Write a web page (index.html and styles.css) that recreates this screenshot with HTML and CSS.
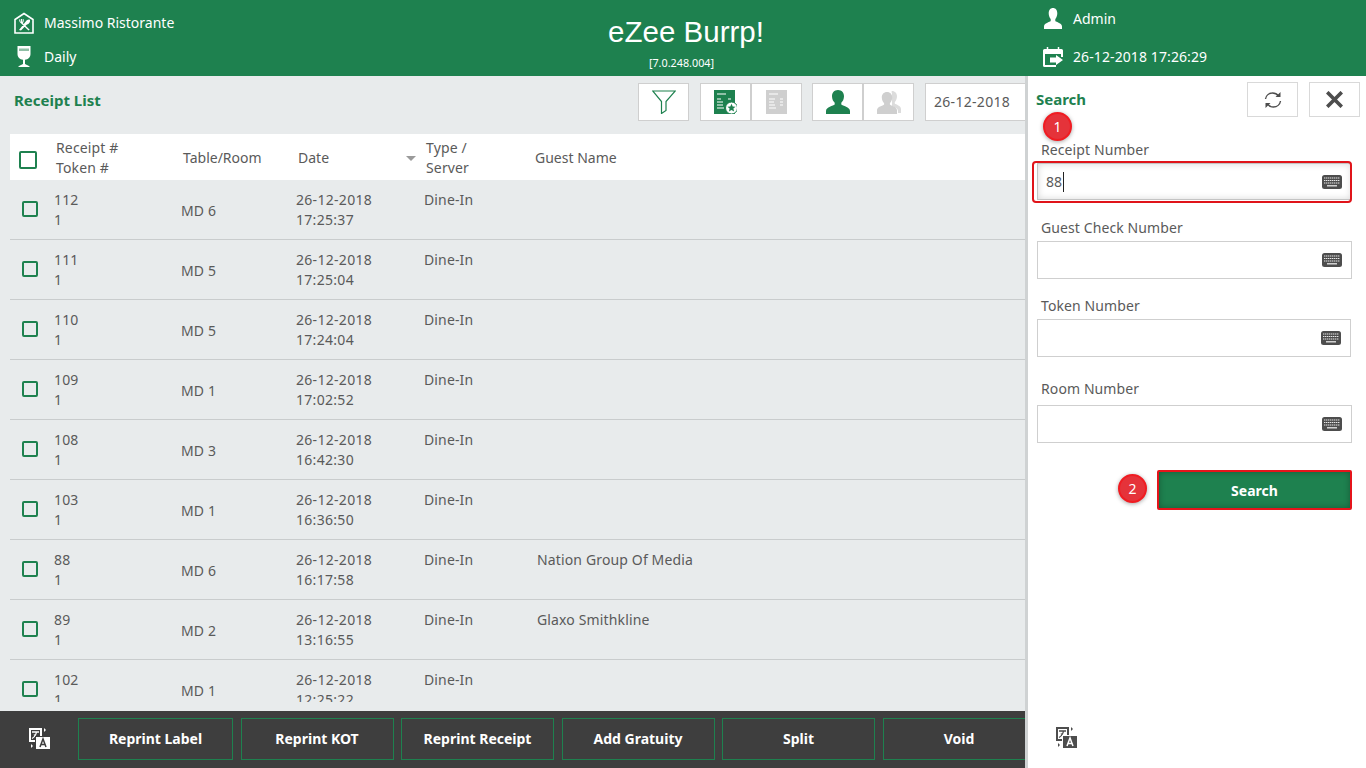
FILE: index.html
```html
<!DOCTYPE html>
<html lang="en">
<head>
<meta charset="utf-8">
<title>eZee Burrp!</title>
<link rel="stylesheet" href="styles.css">
</head>
<body>
<svg class="defs" width="0" height="0" aria-hidden="true">
  <symbol id="kbd" viewBox="0 0 20 14"><rect width="20" height="14" rx="2.5" fill="#4d4d4d"/><path d="M2 3h16M2 5.5h16M2 8h16" stroke="#e8e8e8" stroke-width="1.2" stroke-dasharray="1.4 .6" fill="none"/><path d="M5 10.8h10" stroke="#e8e8e8" stroke-width="1.3"/></symbol>
  <symbol id="translate" viewBox="0 0 22 22"><path d="M1 1h13v14H1z" fill="currentColor"/><path d="M3 3h9v10H3z" fill="var(--tr-bg)"/><path d="M4 5h7M8.5 5c-.5 3-2 5-4.500 6.500M6 7.500c1 1.500 2 2.500 3.500 3" stroke="currentColor" stroke-width="1.300" fill="none"/><path d="M7 9h15v13H7z" fill="var(--tr-bg)"/><path d="M8 10h14v12H8z" fill="currentColor"/><path d="M12 20l3-8 3 8M13 17.500h4" stroke="var(--tr-bg)" stroke-width="1.500" fill="none"/><path d="M16 1l2 2-2 2zM3 17l2 2-2 2z" fill="currentColor"/></symbol>
</svg>
<header class="topbar">
  <div class="top-col top-left">
    <div class="top-item">
      <svg class="top-icon" viewBox="0 0 22 22"><path d="M2 21V7.500L11 1.500l9 6V21z" fill="none" stroke="#fff" stroke-width="1.600"/><path d="M6 18l7.500-9.500c1.500-1.300 3-1.300 3.500-.6.500 1.600-.7 4.100-3.400 4.900L8 18.500zM15.500 18.500L8.500 11.800C7 10.500 6 9.500 6.200 7.500l1-.2.300 2.500.6-.1-.1-2.600h1l.2 2.600.6-.1-.1-2.500 1 .2c.3 2-.3 3.300-1 3.600l7 6.900z" fill="#fff"/></svg>
      <span>Massimo Ristorante</span>
    </div>
    <div class="top-item">
      <svg class="top-icon" viewBox="0 0 22 22"><path d="M4.500 0h13v8c0 3.500-2.500 5.500-5.500 5.700V18l4.500 2.200V21H5.500v-.8L10 18v-4.300C7 13.500 4.500 11.500 4.500 8z" fill="#fff"/><path d="M6 2.500h10v2.500H6z" fill="#8fbfa6"/></svg>
      <span>Daily</span>
    </div>
  </div>
  <div class="top-center">
    <div class="brand">eZee Burrp!</div>
    <div class="version">[7.0.248.004]</div>
  </div>
  <div class="top-col top-right">
    <div class="top-item">
      <svg class="top-icon" viewBox="0 0 22 22"><path d="M11 0c2.700 0 4.300 2.200 4.300 5.300 0 2.400-.9 4.500-2 5.700v2c.9 1.200 6.700 2 6.700 5.500V21H2v-2.500C2 15 7.800 14.200 8.700 13v-2c-1.100-1.200-2-3.300-2-5.700C6.700 2.200 8.300 0 11 0z" fill="#fff"/></svg>
      <span>Admin</span>
    </div>
    <div class="top-item">
      <svg class="top-icon" viewBox="0 0 22 22"><path d="M2.500 3h17a1.500 1.500 0 0 1 1.500 1.500V11h-2V8H3v11h11v2H2.500A1.500 1.500 0 0 1 1 19.500v-15A1.500 1.500 0 0 1 2.500 3z" fill="#fff"/><path d="M5.500 1v4M16.500 1v4" stroke="#fff" stroke-width="1.500"/><path d="M8 11.500h6V9l7 5-7 5v-2.500H8z" fill="#fff"/></svg>
      <span class="top-clock">26-12-2018 17:26:29</span>
    </div>
  </div>
</header>
<div class="main">
  <section class="list">
    <div class="toolbar">
      <h2 class="title">Receipt List</h2>
      <div class="tools">
        <button class="tool" type="button"><svg class="ic-filter" viewBox="0 0 24 24"><path d="M.7 1h22.600L14 11.500v9L9.500 23.500V11.500z" fill="none" stroke="#1e814f" stroke-width="1.200"/></svg></button>
        <div class="tool-group">
          <button class="tool" type="button"><svg class="ic-doc" viewBox="0 0 23 24"><path d="M0 0h21v24H0z" fill="#1e814f"/><path d="M3 4h9M3 9h4M14 9h3M3 12h6M3 15h6M3 18h7" stroke="#fff" stroke-width="1.200"/><circle cx="17.500" cy="18" r="6" fill="#fff" stroke="#1e814f" stroke-width="1"/><path d="M17.500 13.800l1.200 2.700 2.800.2-2.100 1.900.7 2.900-2.600-1.500-2.600 1.500.7-2.900-2.100-1.900 2.800-.2z" fill="#1e814f"/></svg></button>
          <button class="tool" type="button"><svg class="ic-doc" viewBox="0 0 23 24"><path d="M1 0h21v24H1z" fill="#cfcfcf"/><path d="M4 4h9M4 9h6M15 9h3M4 12h5M15 12h3M4 15h6M4 18h7M15 15h3" stroke="#fff" stroke-width="1.200"/></svg></button>
        </div>
        <div class="tool-group tool-group-users">
          <button class="tool" type="button"><svg class="ic-user" viewBox="0 0 24 24"><path d="M12 0c3.800 0 6 2.800 6 6.300 0 3-1.300 5.200-2.700 6.500v1.700c1.200 1.500 8.700 2.300 8.700 6.500V24H0v-3c0-4.200 7.500-5 8.700-6.500v-1.700C7.300 11.500 6 9.300 6 6.300 6 2.800 8.200 0 12 0z" fill="#1e814f"/></svg></button>
          <button class="tool" type="button"><svg class="ic-user" viewBox="0 0 24 24"><path d="M15 1c3 0 5 2.300 5 5.300 0 2.500-1 4.500-2.200 5.700v1.500c1 1.200 6.200 2 6.200 5.500V23h-3v-2c0-3-4-4-6-5V4c0-1.500-1-2.500 0-3z" fill="#dcdcdc"/><path d="M10 2c3.300 0 5.200 2.400 5.200 5.500 0 2.600-1.100 4.500-2.300 5.600v1.500c1 1.300 7.100 2 7.100 5.600V24H0v-3.800c0-3.600 6.100-4.300 7.100-5.600v-1.500C5.900 12 4.800 10.100 4.800 7.500 4.800 4.400 6.700 2 10 2z" fill="#cfcfcf"/></svg></button>
        </div>
        <div class="date-box">26-12-2018</div>
      </div>
    </div>
    <div class="table-wrap">
      <div class="row head">
        <span class="check-cell"><span class="check check-lg"></span></span>
        <span class="stack"><span>Receipt #</span><span>Token #</span></span>
        <span>Table/Room</span>
        <span class="date-head">Date<span class="sort"></span></span>
        <span class="stack"><span>Type /</span><span>Server</span></span>
        <span>Guest Name</span>
      </div>
      <div class="body">
        <div class="row item"><span class="check-cell"><span class="check"></span></span><span class="stack"><span>112</span><span>1</span></span><span>MD 6</span><span class="stack date"><span>26-12-2018</span><span>17:25:37</span></span><span class="top">Dine-In</span><span class="top"></span></div>
        <div class="row item"><span class="check-cell"><span class="check"></span></span><span class="stack"><span>111</span><span>1</span></span><span>MD 5</span><span class="stack date"><span>26-12-2018</span><span>17:25:04</span></span><span class="top">Dine-In</span><span class="top"></span></div>
        <div class="row item"><span class="check-cell"><span class="check"></span></span><span class="stack"><span>110</span><span>1</span></span><span>MD 5</span><span class="stack date"><span>26-12-2018</span><span>17:24:04</span></span><span class="top">Dine-In</span><span class="top"></span></div>
        <div class="row item"><span class="check-cell"><span class="check"></span></span><span class="stack"><span>109</span><span>1</span></span><span>MD 1</span><span class="stack date"><span>26-12-2018</span><span>17:02:52</span></span><span class="top">Dine-In</span><span class="top"></span></div>
        <div class="row item"><span class="check-cell"><span class="check"></span></span><span class="stack"><span>108</span><span>1</span></span><span>MD 3</span><span class="stack date"><span>26-12-2018</span><span>16:42:30</span></span><span class="top">Dine-In</span><span class="top"></span></div>
        <div class="row item"><span class="check-cell"><span class="check"></span></span><span class="stack"><span>103</span><span>1</span></span><span>MD 1</span><span class="stack date"><span>26-12-2018</span><span>16:36:50</span></span><span class="top">Dine-In</span><span class="top"></span></div>
        <div class="row item"><span class="check-cell"><span class="check"></span></span><span class="stack"><span>88</span><span>1</span></span><span>MD 6</span><span class="stack date"><span>26-12-2018</span><span>16:17:58</span></span><span class="top">Dine-In</span><span class="top">Nation Group Of Media</span></div>
        <div class="row item"><span class="check-cell"><span class="check"></span></span><span class="stack"><span>89</span><span>1</span></span><span>MD 2</span><span class="stack date"><span>26-12-2018</span><span>13:16:55</span></span><span class="top">Dine-In</span><span class="top">Glaxo Smithkline</span></div>
        <div class="row item"><span class="check-cell"><span class="check"></span></span><span class="stack"><span>102</span><span>1</span></span><span>MD 1</span><span class="stack date"><span>26-12-2018</span><span>12:25:22</span></span><span class="top">Dine-In</span><span class="top"></span></div>
      </div>
    </div>
    <footer class="actions">
      <svg class="tr-icon tr-dark" viewBox="0 0 22 22"><use href="#translate"/></svg>
      <div class="action-btns">
        <button class="action" type="button">Reprint Label</button>
        <button class="action" type="button">Reprint KOT</button>
        <button class="action" type="button">Reprint Receipt</button>
        <button class="action" type="button">Add Gratuity</button>
        <button class="action" type="button">Split</button>
        <button class="action" type="button">Void</button>
      </div>
    </footer>
  </section>
  <aside class="panel">
    <div class="panel-head">
      <h2 class="title panel-title">Search</h2>
      <button class="panel-btn" type="button"><svg class="ic-refresh" viewBox="0 0 18 18"><path d="M1.500 8C2 4.500 5 2 8.500 2c2.500 0 4.500 1 6 3M16.500 10c-.5 3.500-3.500 6-7 6-2.500 0-4.500-1-6-3" fill="none" stroke="#4d4d4d" stroke-width="1.400"/><path d="M16.500 1v5h-5zM1.500 17v-5h5z" fill="#4d4d4d"/></svg></button>
      <button class="panel-btn" type="button"><svg class="ic-close" viewBox="1 1 14 14"><path d="M2 2l12 12M14 2L2 14" stroke="#4d4d4d" stroke-width="3"/></svg></button>
    </div>
    <form class="form">
      <span class="badge badge-one">1</span>
      <label class="field field-first">
        <span class="label">Receipt Number</span>
        <span class="input focus"><span class="value">88</span><span class="caret"></span><svg class="kbd" viewBox="0 0 20 14"><use href="#kbd"/></svg></span>
      </label>
      <label class="field field-guest">
        <span class="label">Guest Check Number</span>
        <span class="input"><svg class="kbd" viewBox="0 0 20 14"><use href="#kbd"/></svg></span>
      </label>
      <label class="field field-token">
        <span class="label">Token Number</span>
        <span class="input"><svg class="kbd" viewBox="0 0 20 14"><use href="#kbd"/></svg></span>
      </label>
      <label class="field field-room">
        <span class="label">Room Number</span>
        <span class="input"><svg class="kbd" viewBox="0 0 20 14"><use href="#kbd"/></svg></span>
      </label>
      <div class="submit-row">
        <span class="badge badge-two">2</span>
        <button class="submit" type="button">Search</button>
      </div>
    </form>
    <svg class="tr-icon tr-light" viewBox="0 0 22 22"><use href="#translate"/></svg>
  </aside>
</div>
</body>
</html>
```
FILE: styles.css
```css
* { box-sizing: border-box; }
html, body { margin: 0; height: 100%; }
body {
  width: 1366px;
  height: 768px;
  overflow: hidden;
  font-family: "Noto Sans", "Open Sans", sans-serif;
  font-size: 14px;
  color: #5a5a5a;
  background: #e8ebec;
  display: flex;
  flex-direction: column;
}
.defs { position: absolute; }
button { font-family: inherit; padding: 0; cursor: pointer; }

.topbar {
  height: 76px;
  flex: none;
  background: #1e814f;
  color: #fff;
  display: flex;
}
.top-col { display: flex; flex-direction: column; }
.top-left { width: 346px; padding: 12px 0 0 13px; gap: 12px; }
.top-right { width: 340px; padding: 8px 0 0 16px; gap: 16px; }
.top-center { flex: 1; text-align: center; padding-top: 12px; }
.top-item { display: flex; align-items: center; gap: 9px; height: 22px; line-height: 22px; }
.top-icon { width: 22px; height: 22px; flex: none; }
.top-clock { letter-spacing: .1px; }
.brand { font-family: "Liberation Sans", Arial, sans-serif; font-size: 29.500px; line-height: 40px; }
.version { font-size: 10.800px; line-height: 14px; margin: 4px 9px 0 0; }

.main { flex: 1; display: flex; min-height: 0; }
.list { width: 1025px; display: flex; flex-direction: column; min-height: 0; }
.toolbar { height: 58px; flex: none; display: flex; padding: 7px 0 0 14px; justify-content: space-between; }
.title { margin: 0; font-size: 15px; font-weight: 700; color: #1e814f; line-height: 34px; }
.tools { display: flex; height: 38px; }
.tool-group { display: flex; margin-left: 11px; }
.tool-group-users { margin-left: 10px; }
.tool {
  width: 51px;
  height: 38px;
  background: #fff;
  border: 1px solid #cfcfcf;
  display: flex;
  align-items: center;
  justify-content: center;
}
.ic-filter { width: 24px; height: 24px; }
.ic-doc { width: 23px; height: 24px; }
.ic-user { width: 24px; height: 24px; }
.date-box {
  width: 100px;
  margin-left: 11px;
  background: #fff;
  border: 1px solid #cfcfcf;
  border-right: 0;
  line-height: 36px;
  padding-left: 8px;
  letter-spacing: .3px;
}

.table-wrap { flex: 1; min-height: 0; margin-left: 10px; padding-bottom: 9px; display: flex; flex-direction: column; }
.row {
  display: grid;
  grid-template-columns: 44px 127px 115px 128px 113px 1fr;
  align-items: center;
}
.head { height: 46px; flex: none; background: #fff; line-height: 20px; padding-top: 2px; grid-template-columns: 46px 127px 115px 128px 109px 1fr; }
.head .stack { letter-spacing: .15px; }
.body { flex: 1; overflow: hidden; min-height: 0; }
.item { height: 60px; border-bottom: 1px solid #c9cccd; line-height: 20px; padding-top: 3px; letter-spacing: .14px; }
.item .stack { margin-bottom: 2px; }
.item .date { letter-spacing: .3px; }
.check-cell { display: flex; padding-left: 12px; margin-bottom: 4px; }
.head .check-cell { padding-left: 9px; margin-bottom: 0; margin-top: 4px; }
.check { width: 16px; height: 16px; border: 2px solid #1e814f; border-radius: 2px; display: block; }
.check-lg { width: 18px; height: 18px; border-width: 2.500px; }
.stack { display: flex; flex-direction: column; }
.top { align-self: start; padding-top: 7px; }
.date-head { display: flex; justify-content: space-between; align-items: center; padding-right: 10px; }
.sort { width: 0; height: 0; border-left: 5px solid transparent; border-right: 5px solid transparent; border-top: 5px solid #9a9a9a; }

.actions { height: 57px; flex: none; background: #3e3e3e; display: flex; padding-top: 7px; position: relative; z-index: 1; }
.tr-icon { width: 22px; height: 22px; }
.tr-dark { color: #fff; --tr-bg: #3e3e3e; margin: 9px 0 0 28px; flex: none; }
.tr-light { color: #4d4d4d; --tr-bg: #fff; margin: auto 0 20px 27px; display: block; flex: none; }
.action-btns { display: flex; gap: 7.500px; margin-left: 28px; flex: 1; min-width: 0; overflow: hidden; height: 42px; }
.action {
  width: 153px;
  flex: none;
  height: 42px;
  background: #3e3e3e;
  border: 1px solid #1e814f;
  color: #fff;
  font-size: 14px;
  font-weight: 700;
  padding-bottom: 2px;
}
.action:first-child { width: 155px; }

.panel {
  width: 341px;
  background: #fff;
  border-left: 3px solid #cfd2d3;
  display: flex;
  flex-direction: column;
  min-height: 0;
}
.panel-head { display: flex; padding: 6px 6px 0 8px; height: 60px; flex: none; }
.panel-title { flex: 1; line-height: 34px; }
.panel-btn {
  width: 51px;
  height: 35px;
  background: #fff;
  border: 1px solid #d9d9d9;
  margin-left: 11px;
  display: flex;
  align-items: center;
  justify-content: center;
}
.ic-refresh { width: 18px; height: 18px; }
.ic-close { width: 17px; height: 17px; }

.form { position: relative; padding: 0 14px 0 9px; }
.field { display: block; }
.label { display: block; line-height: 20px; padding-left: 4px; height: 20px; letter-spacing: .1px; }
.field-first { padding-top: 4px; }
.field-guest { margin-top: 18px; }
.field-token { margin-top: 17px; }
.field-token .input { margin-right: 1px; }
.field-room { margin-top: 22px; }
.field-room .input { margin-top: 6px; }
.input {
  position: relative;
  display: flex;
  align-items: center;
  height: 38px;
  margin-top: 3px;
  background: #fff;
  border: 1px solid #cfcfcf;
  padding-left: 8px;
  line-height: 20px;
}
.focus {
  height: 37px;
  border-color: #c4c4c4;
  border-right-color: #fff;
  box-shadow: inset 0 0 7px rgba(0,0,0,.16);
}
.focus::after {
  content: "";
  position: absolute;
  left: -6px;
  right: -1px;
  top: -3px;
  bottom: -4px;
  border: 2px solid #e0141a;
  border-radius: 4px;
  pointer-events: none;
}
.caret { width: 1px; height: 20px; background: #222; margin-left: 1px; }
.kbd { position: absolute; right: 9px; top: 11px; width: 20px; height: 14px; }

.submit-row { display: flex; justify-content: flex-end; margin-top: 27px; position: relative; }
.submit {
  width: 195px;
  height: 40px;
  background: #1e814f;
  border: 2px solid #e5141b;
  border-radius: 2px;
  color: #fff;
  font-size: 14px;
  font-weight: 700;
  box-shadow: inset 0 0 6px rgba(0,0,0,.3);
}
.badge {
  position: absolute;
  width: 29px;
  height: 29px;
  border-radius: 50%;
  background: #e5333a;
  border: 2px solid #f01c22;
  color: #fff;
  text-align: center;
  line-height: 25px;
  font-size: 14px;
  box-shadow: 0 1px 4px rgba(0,0,0,.35);
}
.badge-one { left: 15px; top: -24px; }
.badge-two { left: 81px; top: 4px; }
```
